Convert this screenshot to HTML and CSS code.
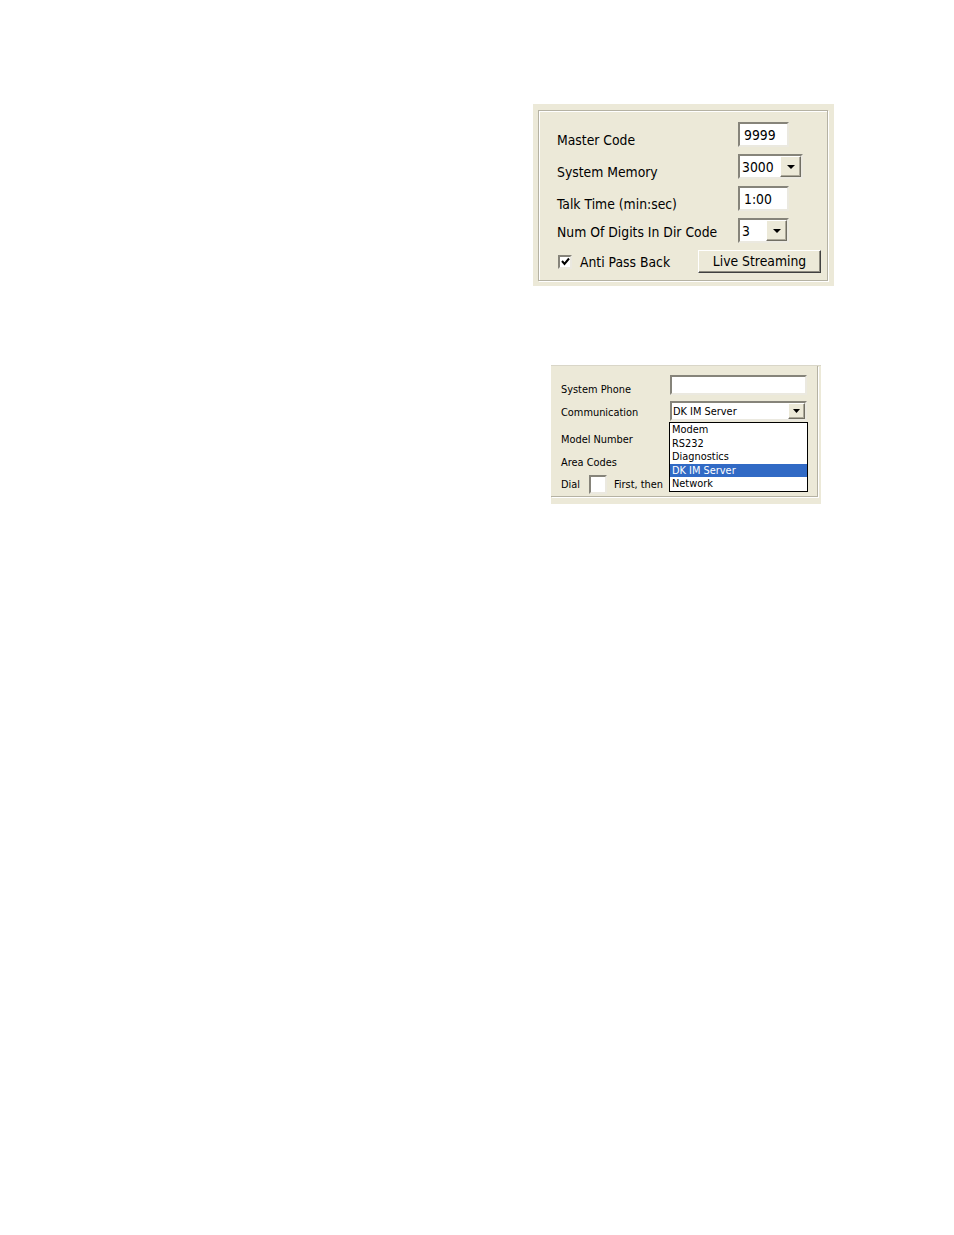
FILE: index.html
```html
<!DOCTYPE html>
<html>
<head>
<meta charset="utf-8">
<title>Settings</title>
<link rel="stylesheet" href="styles.css">
</head>
<body>
<div class="page">
  <section class="panel panel-a">
    <div class="group group-a">
      <div class="row">
        <span class="label">Master Code</span>
        <div class="field fa w51"><span class="val pad4">9999</span></div>
      </div>
      <div class="row">
        <span class="label">System Memory</span>
        <div class="field fa w65"><span class="val pad2">3000</span><span class="drop da"><svg width="8" height="4" viewBox="0 0 8 4"><polygon points="0,0 8,0 4,4" fill="#000"/></svg></span></div>
      </div>
      <div class="row">
        <span class="label">Talk Time (min:sec)</span>
        <div class="field fa w51"><span class="val pad4">1:00</span></div>
      </div>
      <div class="row">
        <span class="label lift">Num Of Digits In Dir Code</span>
        <div class="field fa w51"><span class="val pad2">3</span><span class="drop da"><svg width="8" height="4" viewBox="0 0 8 4"><polygon points="0,0 8,0 4,4" fill="#000"/></svg></span></div>
      </div>
      <div class="row last">
        <div class="check"><span class="box"><svg width="9" height="9" viewBox="0 0 9 9"><polyline points="1,4 3.5,7 8,1.5" fill="none" stroke="#000" stroke-width="2"/></svg></span><span>Anti Pass Back</span></div>
        <span class="btn">Live Streaming</span>
      </div>
    </div>
  </section>

  <section class="panel panel-b">
    <div class="group group-b">
      <div class="brow r1">
        <span class="blabel">System Phone</span>
        <div class="field fb"></div>
      </div>
      <div class="brow r2">
        <span class="blabel">Communication</span>
        <div class="combo-wrap">
          <div class="field fb"><span class="bval">DK IM Server</span><span class="drop db"><svg width="7" height="4" viewBox="0 0 7 4"><polygon points="0,0 7,0 3.5,4" fill="#000"/></svg></span></div>
          <ul class="list">
            <li>Modem</li>
            <li>RS232</li>
            <li>Diagnostics</li>
            <li class="sel">DK IM Server</li>
            <li>Network</li>
          </ul>
        </div>
      </div>
      <div class="brow r3">
        <span class="blabel">Model Number</span>
      </div>
      <div class="brow r4">
        <span class="blabel">Area Codes</span>
      </div>
      <div class="brow r5">
        <span class="dial">Dial</span>
        <span class="field small"></span>
        <span class="first">First, then</span>
      </div>
    </div>
  </section>
</div>
</body>
</html>
```

FILE: styles.css
```css
html, body {
  margin: 0;
  background: #ffffff;
}

body {
  font-family: "DejaVu Sans Condensed", "DejaVu Sans", sans-serif;
  color: #000;
}

.page {
  padding-top: 104px;
}

.panel {
  background: #ece9d8;
  box-sizing: border-box;
}

/* ---------- Panel A ---------- */
.panel-a {
  margin-left: 533px;
  width: 301px;
  padding: 6px 6px 5px 5px;
}

.group-a {
  border: 1px solid #b5b2a3;
  box-shadow: inset 1px 1px #ffffff, 1px 1px #ffffff;
  padding: 11px 6px 7px 18px;
  display: flex;
  flex-direction: column;
  gap: 7px;
}

.row {
  display: flex;
  align-items: flex-end;
  height: 25px;
}

.label {
  width: 181px;
  font-size: 13.8px;
  line-height: 16px;
  flex: none;
  margin-bottom: -1px;
}

.label.lift {
  margin-bottom: 3px;
}

.field {
  box-sizing: border-box;
  background: #fff;
  border-style: solid;
  border-width: 2px;
  border-color: #86847a #ebe9e0 #ebe9e0 #86847a;
  display: flex;
  align-items: center;
  position: relative;
}

.fa {
  height: 25px;
  font-size: 13.8px;
}

.w51 { width: 51px; }
.w65 { width: 65px; }

.val {
  flex: 1;
  line-height: 16px;
}

.pad4 { padding-left: 4px; }
.pad2 { padding-left: 2px; }

.drop {
  box-sizing: border-box;
  background: #ece9d8;
  border: 1px solid;
  border-color: #fff #716f64 #716f64 #fff;
  box-shadow: inset -1px -1px #aca899;
  display: flex;
  align-items: center;
  justify-content: center;
  flex: none;
}

.da {
  width: 21px;
  height: 21px;
}

.da svg, .db svg {
  display: block;
}

.row.last {
  height: 23px;
  align-items: center;
}

.check {
  display: flex;
  align-items: center;
  margin-left: 1px;
  font-size: 13.8px;
  line-height: 16px;
}

.box {
  box-sizing: border-box;
  width: 14px;
  height: 14px;
  background: #fff;
  border-style: solid;
  border-width: 2px;
  border-color: #86847a #ebe9e0 #ebe9e0 #86847a;
  display: flex;
  align-items: center;
  justify-content: center;
  margin-right: 8px;
}

.box svg {
  display: block;
}

.btn {
  margin-left: auto;
  box-sizing: border-box;
  width: 123px;
  height: 23px;
  background: #ece9d8;
  border: 1px solid;
  border-color: #ffffff #404040 #404040 #ffffff;
  box-shadow: inset -1px -1px #8d8b80;
  font-size: 13.8px;
  line-height: 20px;
  text-align: center;
}

/* ---------- Panel B ---------- */
.panel-b {
  margin-top: 79px;
  margin-left: 551px;
  width: 270px;
  border-top: 1px solid #d9d6c8;
  padding: 0 3px 7px 0;
}

.group-b {
  border-right: 1px solid #b5b2a3;
  border-bottom: 1px solid #b5b2a3;
  box-shadow: 1px 1px #ffffff;
  padding: 9px 10px 2px 10px;
  font-size: 10.9px;
}

.brow {
  display: flex;
  align-items: flex-start;
}

.blabel {
  width: 109px;
  flex: none;
  line-height: 13px;
}

.r1 { height: 26px; }
.r1 .blabel { padding-top: 8px; }
.r2 { height: 27px; }
.r2 .blabel { padding-top: 5px; }
.r3 { height: 23px; }
.r3 .blabel { padding-top: 5px; }
.r4 { height: 23px; }
.r4 .blabel { padding-top: 5px; }
.r5 {
  height: 20px;
  align-items: center;
}

.fb {
  width: 137px;
  height: 20px;
}

.combo-wrap {
  position: relative;
}

.bval {
  flex: 1;
  line-height: 13px;
  padding-left: 1px;
}

.db {
  width: 17px;
  height: 16px;
}

.list {
  position: absolute;
  top: 21px;
  left: -1px;
  width: 139px;
  box-sizing: border-box;
  margin: 0;
  padding: 0;
  list-style: none;
  background: #fff;
  border: 1px solid #000;
  z-index: 2;
}

.list li {
  height: 13.5px;
  line-height: 13.5px;
  padding-left: 2px;
  white-space: nowrap;
}

.list li.sel {
  background: #316ac5;
  color: #fff;
}

.dial {
  line-height: 13px;
  width: 28px;
  flex: none;
}

.small {
  width: 18px;
  height: 19px;
}

.first {
  margin-left: 7px;
  line-height: 13px;
}
```
